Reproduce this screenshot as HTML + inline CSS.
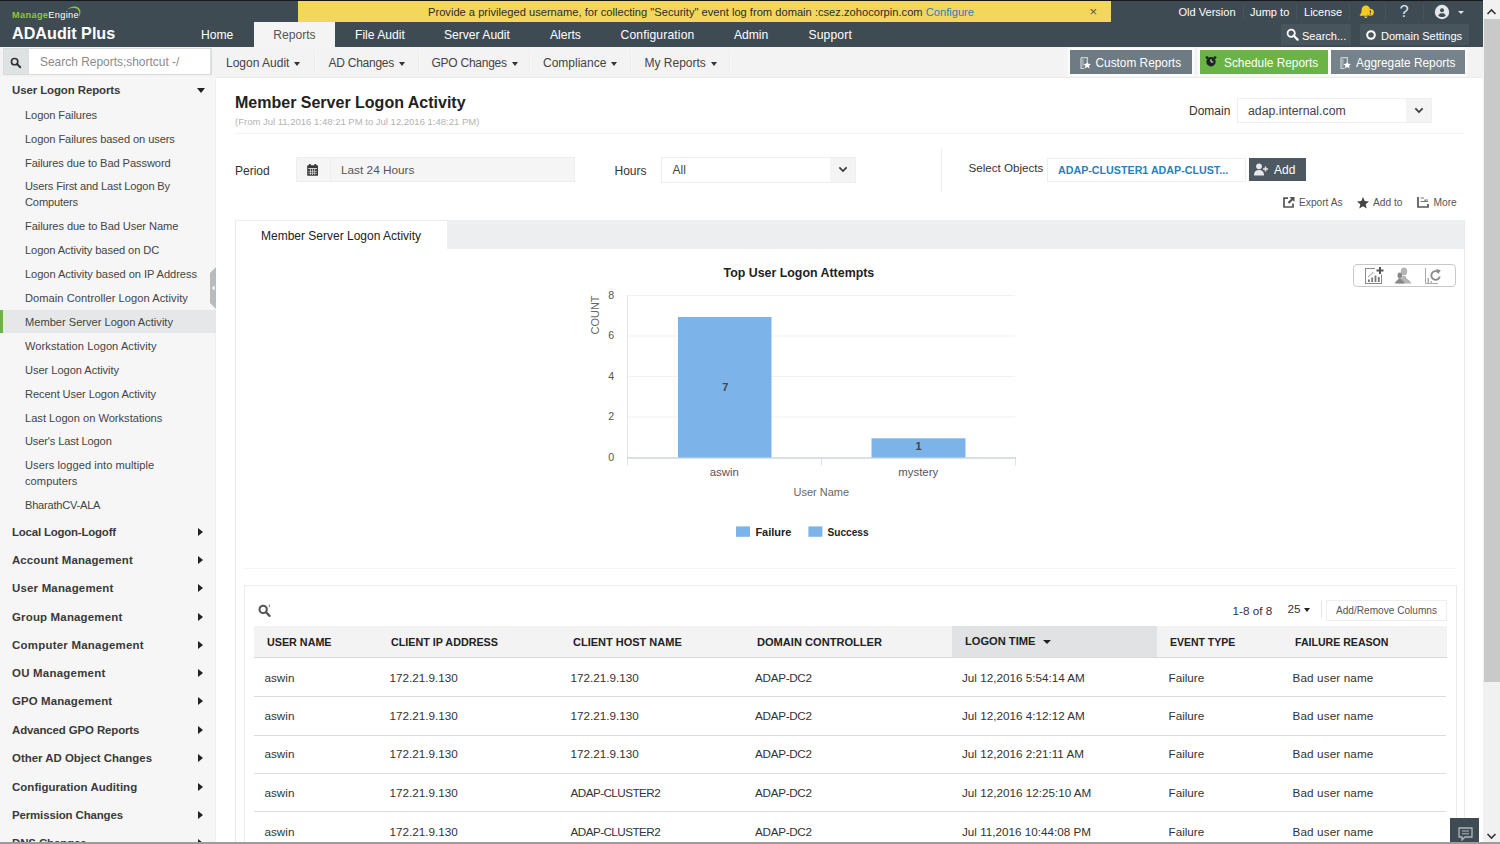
<!DOCTYPE html>
<html lang="en">
<head>
<meta charset="utf-8">
<title>ADAudit Plus - Member Server Logon Activity</title>
<style>
*{box-sizing:border-box;margin:0;padding:0}
html,body{width:1500px;height:844px;overflow:hidden;background:#fff}
body{font-family:"Liberation Sans",Arial,sans-serif;font-size:12px;color:#333;position:relative}
.abs{position:absolute;white-space:nowrap}
a{text-decoration:none;color:inherit}
/* ---------- header ---------- */
#hdr{position:absolute;left:0;top:0;width:1483px;height:47px;background:#3f4b53}
#topline{position:absolute;left:0;top:0;width:1500px;height:1px;background:#15181a}
#banner{position:absolute;left:298px;top:1px;width:813px;height:21px;background:#f3d75d;color:#2c2c2c;font-size:11.15px;line-height:23px}
#banner .msg{position:absolute;left:130px;top:0;white-space:nowrap}
#banner .msg a{color:#2b7fb4}
#banner .x{position:absolute;left:789px;top:-1px;font-size:13px;color:#555}
.nav{position:absolute;top:23px;height:25px;line-height:25px;color:#fff;font-size:12.1px;white-space:nowrap}
#tab-act{position:absolute;left:254px;top:22px;width:81px;height:25px;background:#f4f4f4;color:#555;text-align:center;line-height:27px;font-size:12.1px}
.tl{position:absolute;top:2px;height:20px;line-height:20px;color:#fff;font-size:11.05px;white-space:nowrap}
.tsep{position:absolute;top:3px;width:1px;height:18px;background:#47535b}
.hbtn{position:absolute;top:24px;height:21px;background:#49555d;color:#fff;font-size:11.05px;line-height:24.400px;white-space:nowrap}
/* ---------- subnav ---------- */
#sub{position:absolute;left:0;top:47px;width:1483px;height:31px;background:#f3f3f3;border-bottom:1px solid #ececec}
.sn{position:absolute;top:48px;height:30px;line-height:30px;font-size:12px;color:#444;white-space:nowrap}
.sn i{display:inline-block;width:0;height:0;border-left:3px solid transparent;border-right:3px solid transparent;border-top:4px solid #333;margin-left:5px;vertical-align:1px}
.ssep{position:absolute;top:52px;width:2px;height:21px;background:#ebebeb;border-right:1px solid #f8f8f8}
.rbtn{position:absolute;top:50px;height:24px;box-shadow:0 0 0 2.500px #fbfbfb;color:#fff;font-size:11.85px;line-height:24px;white-space:nowrap}
/* ---------- sidebar ---------- */
#side{position:absolute;left:0;top:77px;width:216px;height:767px;background:#f6f6f6;border-right:1px solid #f0f0f0}
.sh{position:absolute;left:12px;font-weight:bold;font-size:11.45px;color:#3a3a3a;white-space:nowrap;line-height:16px}
.si{position:absolute;left:25px;font-size:11.1px;color:#444;line-height:16px;white-space:nowrap}
.car-r{position:absolute;left:197px;width:0;height:0;border-top:4px solid transparent;border-bottom:4px solid transparent;border-left:5px solid #222}
.car-d{position:absolute;left:197px;width:0;height:0;border-left:4px solid transparent;border-right:4px solid transparent;border-top:5px solid #222}

/* ---------- main ---------- */
.lbl{position:absolute;font-size:12px;line-height:16px;color:#333;white-space:nowrap}
.act{position:absolute;font-size:10.2px;line-height:14px;color:#555;white-space:nowrap}
.th{position:absolute;top:633.800px;font-size:11.7px;line-height:16px;font-weight:bold;color:#222;white-space:nowrap;transform:scaleX(.92);transform-origin:0 50%}
.td{position:absolute;font-size:11.7px;line-height:16px;color:#333;white-space:nowrap}
.rs{position:absolute;left:254px;width:1192px;height:1px;background:#dcdcdc}
.ax{position:absolute;font-size:10.6px;line-height:14px;color:#555;white-space:nowrap}
</style>
</head>
<body>
<!-- HEADER -->
<div id="hdr"></div>
<div id="banner"><span class="msg">Provide a privileged username, for collecting "Security" event log from domain :csez.zohocorpin.com <a>Configure</a></span><span class="x" style="left:791.5px">×</span></div>
<div id="topline"></div>
<!--LOGO-->
<div class="abs" style="left:12px;top:8.7px;font-size:9.2px;line-height:12px;letter-spacing:0.35px;color:#fff"><b style="color:#8cc63e">Manage</b>Engine</div>
<svg class="abs" style="left:62px;top:4px" width="22" height="16" viewBox="0 0 22 16"><path d="M5.5 5.2 C9 2.2 14.5 1.6 17 4.2 C19.3 6.8 18.6 10.6 16.6 13.2 C17.6 10.4 17.6 7.4 15.8 5.6 C13.4 3.4 9 3.8 5.5 5.2 Z" fill="#8cc63e"/></svg>
<div class="abs" style="left:12px;top:23px;font-size:17.3px;line-height:20px;font-weight:bold;color:#fff;transform:scaleX(.935);transform-origin:0 50%">ADAudit Plus</div>
<!--NAV-->
<div class="nav" style="left:201px">Home</div>
<div id="tab-act">Reports</div>
<div class="nav" style="left:355px">File Audit</div>
<div class="nav" style="left:444px">Server Audit</div>
<div class="nav" style="left:550px">Alerts</div>
<div class="nav" style="left:620.5px;letter-spacing:.15px">Configuration</div>
<div class="nav" style="left:734px">Admin</div>
<div class="nav" style="left:808.5px;letter-spacing:.15px">Support</div>
<div class="tl" style="left:1178.5px">Old Version</div>
<div class="tsep" style="left:1243px"></div>
<div class="tl" style="left:1250px">Jump to</div>
<div class="tsep" style="left:1296px"></div>
<div class="tl" style="left:1304px">License</div>
<div class="tsep" style="left:1349px"></div>
<svg class="abs" style="left:1359px;top:4px" width="16" height="16" viewBox="0 0 16 16"><path d="M6.5 1.5c-2.6.3-3.9 2.3-3.9 4.8 0 2.300-.7 3.600-1.800 4.700v.8h8.4c-1.300-1.300-1.200-3.800-.4-5.300.5-1 1.300-1.700 2.200-2-.6-1.600-1.900-2.700-3.500-3zM5 12.600c.2.900.9 1.500 1.800 1.500s1.600-.6 1.800-1.500z" fill="#f4cb1f"/><circle cx="11.300" cy="8.300" r="3.500" fill="#f4cb1f"/><rect x="10.800" y="6.200" width="1.100" height="2.800" fill="#3f4b53"/><rect x="10.800" y="9.600" width="1.100" height="1.100" fill="#3f4b53"/></svg>
<div class="tsep" style="left:1385px"></div>
<div class="tl" style="left:1399.500px;top:1px;font-size:16.500px;color:#dfe2e4">?</div>
<div class="tsep" style="left:1423px"></div>
<svg class="abs" style="left:1434px;top:4px" width="16" height="16" viewBox="0 0 16 16"><circle cx="8" cy="8" r="7.200" fill="#e4e7e9"/><circle cx="8" cy="6.200" r="2" fill="#3f4b53"/><path d="M4.300 11.600c.6-1.800 2-2.400 3.700-2.400s3.100.6 3.700 2.400c-1 1-2.300 1.500-3.700 1.500s-2.700-.5-3.700-1.500z" fill="#3f4b53"/></svg>
<div class="abs" style="left:1457.500px;top:10.500px;width:0;height:0;border-left:3px solid transparent;border-right:3px solid transparent;border-top:3.500px solid #e4e7e9"></div>
<div class="hbtn" style="left:1281px;width:70px"><svg style="position:absolute;left:5px;top:4px" width="13" height="13" viewBox="0 0 13 13"><circle cx="5.200" cy="5.200" r="3.600" fill="none" stroke="#fff" stroke-width="1.800"/><path d="M7.800 7.800 L11.600 11.600" stroke="#fff" stroke-width="2.200" stroke-linecap="round"/></svg><span style="position:absolute;left:21px">Search...</span></div>
<div class="hbtn" style="left:1360px;width:109px"><svg style="position:absolute;left:5px;top:5px" width="12" height="12" viewBox="0 0 12 12"><circle cx="6" cy="6" r="3.800" fill="none" stroke="#fff" stroke-width="2"/></svg><span style="position:absolute;left:21px">Domain Settings</span></div>
<!--SUBNAV-->
<div id="sub"></div>
<div class="abs" style="left:3px;top:48px;width:209px;height:27px;background:#dfe2e3;border:1px solid #d9dcdd"></div>
<div class="abs" style="left:29px;top:49px;width:181px;height:25px;background:#fff"></div>
<svg class="abs" style="left:9.500px;top:56.500px" width="12" height="12" viewBox="0 0 14 14"><circle cx="5.400" cy="5.400" r="3.700" fill="none" stroke="#333" stroke-width="1.900"/><path d="M8.200 8.200 L12 12" stroke="#333" stroke-width="2.300" stroke-linecap="round"/></svg>
<div class="abs" style="left:40px;top:53.5px;font-size:11.95px;line-height:16px;color:#8a8a8a">Search Reports;shortcut -/</div>
<div class="sn" style="left:226px">Logon Audit<i></i></div>
<div class="ssep" style="left:314px"></div>
<div class="sn" style="left:328.5px;letter-spacing:-.25px">AD Changes<i></i></div>
<div class="ssep" style="left:418px"></div>
<div class="sn" style="left:431.5px;letter-spacing:-.25px">GPO Changes<i></i></div>
<div class="ssep" style="left:529px"></div>
<div class="sn" style="left:543px">Compliance<i></i></div>
<div class="ssep" style="left:630px"></div>
<div class="sn" style="left:644.5px">My Reports<i></i></div>
<div class="ssep" style="left:729px"></div>
<div class="rbtn" style="left:1070px;width:122px;background:#6e7b83"><svg style="position:absolute;left:9.5px;top:7px" width="11" height="12" viewBox="0 0 11 12"><path d="M1 .7 H7.300 V5 M4.500 11.300 H1 V.7" fill="none" stroke="#c9cfd3" stroke-width="1.300"/><path d="M2.200 2 H3.600 V9.500 H2.200 Z" fill="#aab2b8"/><path d="M7.200 4.300 L8.300 6.700 L10.900 7 L9 8.800 L9.500 11.400 L7.200 10.100 L4.900 11.400 L5.400 8.800 L3.500 7 L6.100 6.700 Z" fill="#fff"/></svg><span style="position:absolute;left:25.500px;top:.7px">Custom Reports</span></div>
<div class="rbtn" style="left:1200px;width:128px;background:#6bb344"><svg style="position:absolute;left:4.500px;top:6px" width="12" height="11" viewBox="0 0 12 11"><circle cx="6" cy="5.800" r="4.700" fill="#1d2226"/><circle cx="2" cy="1.600" r="1.400" fill="#1d2226"/><circle cx="10" cy="1.600" r="1.400" fill="#1d2226"/><path d="M6 3 V6 H8.300" fill="none" stroke="#d8efc8" stroke-width="1"/></svg><span style="position:absolute;left:24px;top:.7px">Schedule Reports</span></div>
<div class="rbtn" style="left:1331px;width:134px;background:#76838b"><svg style="position:absolute;left:8.5px;top:7px" width="11" height="12" viewBox="0 0 11 12"><path d="M1 .7 H7.300 V5 M4.500 11.300 H1 V.7" fill="none" stroke="#c9cfd3" stroke-width="1.300"/><path d="M2.200 2 H3.600 V9.500 H2.200 Z" fill="#aab2b8"/><path d="M7.200 4.300 L8.300 6.700 L10.900 7 L9 8.800 L9.500 11.400 L7.200 10.100 L4.900 11.400 L5.400 8.800 L3.500 7 L6.100 6.700 Z" fill="#fff"/></svg><span style="position:absolute;left:25px;top:.7px">Aggregate Reports</span></div>
<!--SIDEBAR-->
<div id="side"></div>
<div class="abs" style="left:0;top:310px;width:216px;height:23px;background:#e5e7e8"></div><div class="abs" style="left:0;top:310px;width:3px;height:23px;background:#6bb344"></div>
<svg class="abs" style="left:210px;top:267px" width="6" height="42" viewBox="0 0 6 42"><path d="M6 0 L0 6 L0 36 L6 42 Z" fill="#b7bcbf"/><path d="M4.500 18.500 L2 21 L4.500 23.500 Z" fill="#fff"/></svg>
<div class="si" style="top:107px;letter-spacing:-0.100px">Logon Failures</div>
<div class="si" style="top:131px;letter-spacing:-0.086px">Logon Failures based on users</div>
<div class="si" style="top:155px;letter-spacing:-0.086px">Failures due to Bad Password</div>
<div class="si" style="top:178px;letter-spacing:-0.145px">Users First and Last Logon By<br>Computers</div>
<div class="si" style="top:218px;letter-spacing:-0.072px">Failures due to Bad User Name</div>
<div class="si" style="top:242px;letter-spacing:-0.085px">Logon Activity based on DC</div>
<div class="si" style="top:266px;letter-spacing:-0.053px">Logon Activity based on IP Address</div>
<div class="si" style="top:290px;letter-spacing:0.062px">Domain Controller Logon Activity</div>
<div class="si" style="top:314px">Member Server Logon Activity</div>
<div class="si" style="top:338px;letter-spacing:0.062px">Workstation Logon Activity</div>
<div class="si" style="top:362px;letter-spacing:-0.047px">User Logon Activity</div>
<div class="si" style="top:385.5px;letter-spacing:-0.088px">Recent User Logon Activity</div>
<div class="si" style="top:409.5px">Last Logon on Workstations</div>
<div class="si" style="top:433px;letter-spacing:-0.141px">User's Last Logon</div>
<div class="si" style="top:457px;letter-spacing:0.062px">Users logged into multiple<br>computers</div>
<div class="si" style="top:497px;letter-spacing:-0.238px">BharathCV-ALA</div>
<div class="sh" style="top:82px;letter-spacing:-0.089px">User Logon Reports</div><div class="car-d" style="top:88px"></div>
<div class="sh" style="top:524px;letter-spacing:-0.194px">Local Logon-Logoff</div><div class="car-r" style="left:198px;top:528px"></div>
<div class="sh" style="top:552px;letter-spacing:0.111px">Account Management</div><div class="car-r" style="left:198px;top:556px"></div>
<div class="sh" style="top:580px;letter-spacing:0.203px">User Management</div><div class="car-r" style="left:198px;top:584px"></div>
<div class="sh" style="top:609px;letter-spacing:0.188px">Group Management</div><div class="car-r" style="left:198px;top:613px"></div>
<div class="sh" style="top:637px;letter-spacing:.25px">Computer Management</div><div class="car-r" style="left:198px;top:641px"></div>
<div class="sh" style="top:665px;letter-spacing:.25px">OU Management</div><div class="car-r" style="left:198px;top:669px"></div>
<div class="sh" style="top:693px;letter-spacing:0.121px">GPO Management</div><div class="car-r" style="left:198px;top:697px"></div>
<div class="sh" style="top:722px;letter-spacing:-0.120px">Advanced GPO Reports</div><div class="car-r" style="left:198px;top:726px"></div>
<div class="sh" style="top:750px">Other AD Object Changes</div><div class="car-r" style="left:198px;top:754px"></div>
<div class="sh" style="top:779px;letter-spacing:0.050px">Configuration Auditing</div><div class="car-r" style="left:198px;top:783px"></div>
<div class="sh" style="top:807px;letter-spacing:-0.122px">Permission Changes</div><div class="car-r" style="left:198px;top:811px"></div>
<div class="sh" style="top:835px;letter-spacing:-0.109px">DNS Changes</div><div class="car-r" style="left:198px;top:839px"></div>
<!--MAIN-->
<div class="abs" style="left:235px;top:93px;font-size:16px;line-height:20px;font-weight:bold;color:#222">Member Server Logon Activity</div>
<div class="abs" style="left:235px;top:116px;font-size:9.5px;line-height:12px;color:#b3b3b3">(From Jul 11,2016 1:48:21 PM to Jul 12,2016 1:48:21 PM)</div>
<div class="abs" style="left:235px;top:132.500px;width:1230px;height:1px;background:#f2f2f2"></div>
<div class="lbl" style="left:1189px;top:102.800px">Domain</div>
<div class="abs" style="left:1237px;top:97.800px;width:195px;height:25.200px;border:1px solid #efefef;background:#fff"></div>
<div class="abs" style="left:1406px;top:98.800px;width:25px;height:23.200px;background:#f4f4f4"></div>
<svg class="abs" style="left:1413.500px;top:106.500px" width="10" height="7.300" viewBox="0 0 11 8"><path d="M1.500 1.500 L5.500 5.500 L9.500 1.500" fill="none" stroke="#3a3a3a" stroke-width="1.900"/></svg>
<div class="lbl" style="left:1248px;top:102.800px;color:#444;font-size:12.3px">adap.internal.com</div>

<div class="lbl" style="left:235px;top:162.700px">Period</div>
<div class="abs" style="left:296px;top:157px;width:279px;height:24.500px;border:1px solid #eee;background:#f5f5f5"></div>
<div class="abs" style="left:330px;top:158px;width:1px;height:22.500px;background:#ededed"></div>
<svg class="abs" style="left:307px;top:164px" width="11.300" height="11.800" viewBox="0 0 12 13"><rect x="0" y="1.500" width="12" height="11.500" rx="1" fill="#3a3a3a"/><rect x="2" y="0" width="2" height="3" fill="#3a3a3a"/><rect x="8" y="0" width="2" height="3" fill="#3a3a3a"/><g fill="#f5f5f5"><rect x="1.200" y="4.500" width="9.600" height="0.900"/><rect x="3.300" y="5.400" width=".7" height="6.600"/><rect x="5.650" y="5.400" width=".7" height="6.600"/><rect x="8" y="5.400" width=".7" height="6.600"/><rect x="1.200" y="7.600" width="9.600" height=".6"/><rect x="1.200" y="9.800" width="9.600" height=".6"/></g></svg>
<div class="lbl" style="left:341px;top:162px;color:#555;font-size:11.800px">Last 24 Hours</div>
<div class="lbl" style="left:614.5px;top:162.500px">Hours</div>
<div class="abs" style="left:661px;top:156.700px;width:195px;height:26.500px;border:1px solid #efefef;background:#fff"></div>
<div class="abs" style="left:830px;top:157.700px;width:25px;height:24.500px;background:#f4f4f4"></div>
<svg class="abs" style="left:838px;top:165.500px" width="10" height="7.300" viewBox="0 0 11 8"><path d="M1.500 1.500 L5.500 5.500 L9.500 1.500" fill="none" stroke="#3a3a3a" stroke-width="1.900"/></svg>
<div class="lbl" style="left:672.5px;top:162px;color:#444">All</div>
<div class="abs" style="left:941px;top:148px;width:1px;height:44px;background:#eee"></div>
<div class="lbl" style="left:968.5px;top:160px;font-size:11.600px">Select Objects</div>
<div class="abs" style="left:1046.500px;top:157.500px;width:199.500px;height:24px;border:1px solid #eee;background:#fff"></div>
<div class="abs" style="left:1058px;top:162px;font-size:11.7px;line-height:16px;font-weight:bold;color:#2a7fba;transform:scaleX(.915);transform-origin:0 50%">ADAP-CLUSTER1 ADAP-CLUST...</div>
<div class="abs" style="left:1249px;top:158px;width:57px;height:23px;background:#4d5860"></div>
<svg class="abs" style="left:1254px;top:163px" width="15" height="13" viewBox="0 0 15 13"><circle cx="5" cy="3.300" r="2.900" fill="#e6e8ea"/><path d="M0 12.500 C0 8.500 2 7 5 7 C8 7 10 8.500 10 12.500 Z" fill="#e6e8ea"/><path d="M11.500 3.500 v5 M9 6 h5" stroke="#e6e8ea" stroke-width="1.500"/></svg>
<div class="lbl" style="left:1274px;top:161.500px;color:#fff">Add</div>

<svg class="abs" style="left:1282.500px;top:197px" width="12" height="11" viewBox="0 0 12 11"><path d="M5 1.200 H1 V10 H10 V6.500" fill="none" stroke="#555" stroke-width="1.700"/><path d="M6.500 0 H11.500 V5 L9.800 3.300 L6.300 6.800 L4.700 5.200 L8.200 1.700 Z" fill="#555"/></svg>
<div class="act" style="left:1299px;top:195.500px">Export As</div>
<svg class="abs" style="left:1357px;top:196.500px" width="12" height="12" viewBox="0 0 12 12"><path d="M6 0 L7.700 4 L12 4.400 L8.700 7.200 L9.700 11.500 L6 9.200 L2.300 11.500 L3.300 7.200 L0 4.400 L4.300 4 Z" fill="#444"/></svg>
<div class="act" style="left:1373px;top:195.500px">Add to</div>
<svg class="abs" style="left:1416.500px;top:197px" width="12" height="11" viewBox="0 0 12 11"><path d="M1 0 V10 H11 V7" fill="none" stroke="#555" stroke-width="1.700"/><path d="M3.500 1 H7 M3.500 4.500 H11 M8 4.500 V3 H11" fill="none" stroke="#777" stroke-width="1.200"/></svg>
<div class="act" style="left:1433.500px;top:195.500px">More</div>

<div class="abs" style="left:235px;top:220px;width:1230px;height:29px;background:#eceeef"></div>
<div class="abs" style="left:235px;top:220px;width:1px;height:624px;background:#eaeaea"></div>
<div class="abs" style="left:1464px;top:220px;width:1px;height:624px;background:#eaeaea"></div>
<div class="abs" style="left:236px;top:221px;width:211px;height:29px;background:#fff"></div>
<div class="lbl" style="left:261px;top:227.500px;color:#222">Member Server Logon Activity</div>
<!--CHART-->
<div class="abs" style="left:723.5px;top:265.3px;font-size:12.4px;line-height:17px;font-weight:bold;color:#222">Top User Logon Attempts</div>
<svg class="abs" style="left:580px;top:285px" width="460" height="270" viewBox="580 285 460 270">
<g stroke="#f0f1f4" stroke-width="1"><path d="M628 295.500 H1015 M628 336 H1015 M628 376.500 H1015 M628 417 H1015"/></g>
<path d="M627.500 295 V465.500 M821.500 458 V465.500 M1015.500 458 V465.500" stroke="#dfe3ea" stroke-width="1" fill="none"/>
<path d="M627 458 H1016" stroke="#ccd4df" stroke-width="1.400"/>
<rect x="678" y="317" width="93.500" height="140.500" fill="#7cb3e9"/>
<rect x="871.500" y="438.300" width="94" height="19.200" fill="#7cb3e9"/>
<rect x="736" y="526.400" width="14" height="10.400" fill="#7cb3e9"/>
<rect x="808.400" y="526.400" width="14" height="10.400" fill="#7cb3e9"/>
<g font-family="Liberation Sans, Arial, sans-serif">
<g font-size="10.600" fill="#555" text-anchor="middle"><text x="611.300" y="298.900">8</text><text x="611.300" y="339.400">6</text><text x="611.300" y="379.900">4</text><text x="611.300" y="420.400">2</text><text x="611.300" y="461">0</text></g>
<text x="599" y="315" font-size="11" fill="#666" text-anchor="middle" transform="rotate(-90 599 315)">COUNT</text>
<text x="725.300" y="390.800" font-size="11" font-weight="bold" fill="#444" text-anchor="middle">7</text>
<text x="918.500" y="450" font-size="11" font-weight="bold" fill="#444" text-anchor="middle">1</text>
<text x="724.300" y="476.300" font-size="11.400" fill="#555" text-anchor="middle">aswin</text>
<text x="918.200" y="476.300" font-size="11.400" fill="#555" text-anchor="middle">mystery</text>
<text x="821.300" y="496.200" font-size="11" fill="#666" text-anchor="middle">User Name</text>
<text x="755.400" y="535.600" font-size="11" font-weight="bold" fill="#222">Failure</text>
<text x="827.600" y="535.600" font-size="11" font-weight="bold" fill="#222" textLength="41" lengthAdjust="spacingAndGlyphs">Success</text>
</g>
</svg>
<div class="abs" style="left:1353px;top:264px;width:103px;height:23px;border:1px solid #c9c9c9;border-radius:4px;background:#fff"></div>
<svg class="abs" style="left:1364px;top:266px" width="22" height="19" viewBox="0 0 22 19"><rect x="1.500" y="2.500" width="16" height="15" fill="none" stroke="#8a8a8a" stroke-width="1"/><path d="M4 11 L9 6.500 L10 7.500" fill="none" stroke="#999" stroke-width="1"/><rect x="4" y="13.500" width="1.800" height="2.500" fill="#777"/><rect x="7.300" y="11.500" width="1.800" height="4.500" fill="#777"/><rect x="10.600" y="9.500" width="1.800" height="6.500" fill="#777"/><rect x="13.900" y="11" width="1.800" height="5" fill="#777"/><rect x="11" y="0" width="9.500" height="8.500" fill="#fff"/><path d="M16 1 V8 M12.500 4.500 H19.500" stroke="#555" stroke-width="2"/></svg>
<svg class="abs" style="left:1394px;top:267px" width="19" height="17" viewBox="0 0 19 17"><ellipse cx="10" cy="4.500" rx="3.200" ry="4" fill="#b5b5b5"/><path d="M4.500 16.500 C5 12.500 8 12 8.500 9 H11.500 C12 12 15.500 12.500 17.500 16.500 Z" fill="#b5b5b5"/><ellipse cx="5.800" cy="8.500" rx="2.300" ry="3" fill="#888"/><path d="M1 16.500 C1.500 13.500 4 13.500 4.500 11.500 H7 C7.500 13.500 10 13.500 10.500 16.500 Z" fill="#888"/></svg>
<svg class="abs" style="left:1424px;top:267px" width="19" height="17" viewBox="0 0 19 17"><path d="M1.500 1 V16.500 H14" fill="none" stroke="#aaa" stroke-width="1"/><rect x="3.500" y="11" width="1.500" height="5.500" fill="#aaa"/><rect x="6.500" y="14" width="1.500" height="2.500" fill="#bbb"/><path d="M14.500 5.300 A4.300 4.300 0 1 0 15.800 9.500" fill="none" stroke="#8a8a8a" stroke-width="1.800"/><path d="M12 2 L16.800 3.200 L14.300 7 Z" fill="#8a8a8a"/></svg>
<!--TABLE-->
<div class="abs" style="left:244px;top:568px;width:1212px;height:1px;background:#f5f5f5"></div>
<div class="abs" style="left:244px;top:585px;width:1213px;height:270px;border:1px solid #ebebeb;background:#fff"></div>
<svg class="abs" style="left:257.500px;top:603.500px" width="14.300" height="13.200" viewBox="0 0 13 12"><circle cx="4.700" cy="4.900" r="3.300" fill="none" stroke="#555" stroke-width="1.900"/><path d="M7.200 7.400 L10.500 10.800" stroke="#555" stroke-width="2" stroke-linecap="round"/><path d="M10.300 0.500 V3" stroke="#888" stroke-width="1"/></svg>
<div class="td" style="left:1232.500px;top:602.5px;color:#333">1-8 of 8</div>
<div class="td" style="left:1287.500px;top:601px;color:#333">25</div>
<div class="abs" style="left:1303.500px;top:608px;width:0;height:0;border-left:3px solid transparent;border-right:3px solid transparent;border-top:4px solid #222"></div>
<div class="abs" style="left:1321px;top:600px;width:1px;height:17px;background:#e6e6e6"></div>
<div class="abs" style="left:1326px;top:600px;width:121px;height:21px;border:1px solid #eee;background:#fff"></div>
<div class="abs" style="left:1336px;top:603.500px;font-size:10.100px;line-height:14px;color:#555">Add/Remove Columns</div>
<div class="abs" style="left:254px;top:626px;width:1193px;height:32px;background:#f3f3f3;border-bottom:1px solid #d9d9d9"></div>
<div class="abs" style="left:952px;top:626px;width:205px;height:31px;background:#e0e2e4"></div>
<div class="th" style="left:267px">USER NAME</div>
<div class="th" style="left:391px">CLIENT IP ADDRESS</div>
<div class="th" style="left:572.500px;transform:scaleX(0.941)">CLIENT HOST NAME</div>
<div class="th" style="left:757px;transform:scaleX(0.948)">DOMAIN CONTROLLER</div>
<div class="th" style="left:965px;top:633px;transform:scaleX(0.951)">LOGON TIME</div>
<div class="abs" style="left:1043px;top:639.500px;width:0;height:0;border-left:4px solid transparent;border-right:4px solid transparent;border-top:4.500px solid #222"></div>
<div class="th" style="left:1170px;transform:scaleX(0.897)">EVENT TYPE</div>
<div class="th" style="left:1294.500px;transform:scaleX(0.905)">FAILURE REASON</div>
<div class="td" style="left:264.5px;top:669.5px">aswin</div><div class="td" style="left:389.5px;top:669.5px">172.21.9.130</div><div class="td" style="left:570.5px;top:669.5px">172.21.9.130</div><div class="td" style="left:755px;top:669.5px;letter-spacing:-.3px">ADAP-DC2</div><div class="td" style="left:962px;top:669.5px">Jul 12,2016 5:54:14 AM</div><div class="td" style="left:1168.5px;top:669.5px">Failure</div><div class="td" style="left:1292.5px;top:669.5px;letter-spacing:.13px">Bad user name</div>
<div class="td" style="left:264.5px;top:707.5px">aswin</div><div class="td" style="left:389.5px;top:707.5px">172.21.9.130</div><div class="td" style="left:570.5px;top:707.5px">172.21.9.130</div><div class="td" style="left:755px;top:707.5px;letter-spacing:-.3px">ADAP-DC2</div><div class="td" style="left:962px;top:707.5px">Jul 12,2016 4:12:12 AM</div><div class="td" style="left:1168.5px;top:707.5px">Failure</div><div class="td" style="left:1292.5px;top:707.5px;letter-spacing:.13px">Bad user name</div>
<div class="td" style="left:264.5px;top:746px">aswin</div><div class="td" style="left:389.5px;top:746px">172.21.9.130</div><div class="td" style="left:570.5px;top:746px">172.21.9.130</div><div class="td" style="left:755px;top:746px;letter-spacing:-.3px">ADAP-DC2</div><div class="td" style="left:962px;top:746px">Jul 12,2016 2:21:11 AM</div><div class="td" style="left:1168.5px;top:746px">Failure</div><div class="td" style="left:1292.5px;top:746px;letter-spacing:.13px">Bad user name</div>
<div class="td" style="left:264.5px;top:785px">aswin</div><div class="td" style="left:389.5px;top:785px">172.21.9.130</div><div class="td" style="left:570.5px;top:785px;letter-spacing:-.55px">ADAP-CLUSTER2</div><div class="td" style="left:755px;top:785px;letter-spacing:-.3px">ADAP-DC2</div><div class="td" style="left:962px;top:785px">Jul 12,2016 12:25:10 AM</div><div class="td" style="left:1168.5px;top:785px">Failure</div><div class="td" style="left:1292.5px;top:785px;letter-spacing:.13px">Bad user name</div>
<div class="td" style="left:264.5px;top:823.5px">aswin</div><div class="td" style="left:389.5px;top:823.5px">172.21.9.130</div><div class="td" style="left:570.5px;top:823.5px;letter-spacing:-.55px">ADAP-CLUSTER2</div><div class="td" style="left:755px;top:823.5px;letter-spacing:-.3px">ADAP-DC2</div><div class="td" style="left:962px;top:823.5px">Jul 11,2016 10:44:08 PM</div><div class="td" style="left:1168.5px;top:823.5px">Failure</div><div class="td" style="left:1292.5px;top:823.5px;letter-spacing:.13px">Bad user name</div>
<div class="rs" style="top:696px"></div><div class="rs" style="top:734.7px"></div><div class="rs" style="top:773.2px"></div><div class="rs" style="top:811.4px"></div>
<!--SCROLL-->
<div class="abs" style="left:1483px;top:0;width:17px;height:844px;background:#f1f1f1"></div>
<div class="abs" style="left:1484px;top:19px;width:16px;height:663px;background:#c9c9c9"></div>
<svg class="abs" style="left:1486px;top:8px" width="11" height="8" viewBox="0 0 11 8"><path d="M1.500 6 L5.500 2 L9.500 6" fill="none" stroke="#333" stroke-width="1.600"/></svg>
<svg class="abs" style="left:1486px;top:832px" width="11" height="8" viewBox="0 0 11 8"><path d="M1.500 2 L5.500 6 L9.500 2" fill="none" stroke="#333" stroke-width="1.600"/></svg>
<div class="abs" style="left:1450px;top:818px;width:28.500px;height:26px;background:#3f4b53"></div>
<svg class="abs" style="left:1457.500px;top:826.500px" width="15" height="14" viewBox="0 0 15 14"><path d="M1 1 H14 V10 H7 L4 13 V10 H1 Z" fill="none" stroke="#aeb6bb" stroke-width="1.300"/><path d="M4 4 H11 M4 6.800 H11" stroke="#aeb6bb" stroke-width="1"/></svg>
<div class="abs" style="left:0;top:842px;width:1500px;height:2px;background:#9a9da0"></div>
</body>
</html>
